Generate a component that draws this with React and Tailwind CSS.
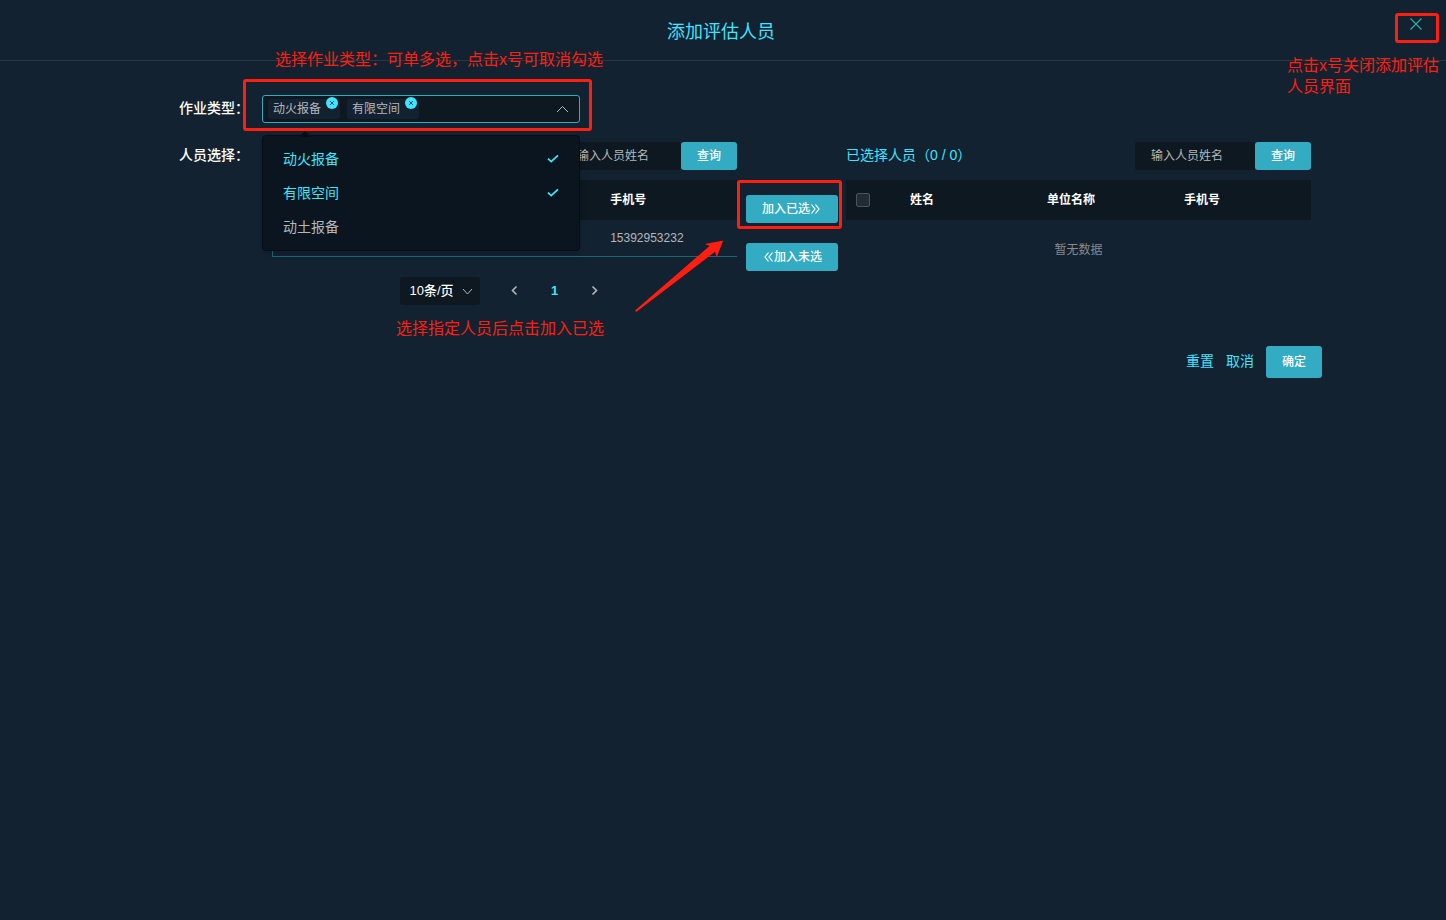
import React, { useState } from 'react';

const workTypes = ['动火报备', '有限空间', '动土报备'];

function Chevron({ direction, className }) {
  const paths = {
    up: 'M1 9 L6.5 3.5 L12 9',
    down: 'M2 4 L6.5 9 L11 4',
    left: 'M8.5 2.5 L4.5 6.5 L8.5 10.5',
    right: 'M4.5 2.5 L8.5 6.5 L4.5 10.5'
  };
  return (
    <svg viewBox="0 0 13 13" fill="none" stroke="currentColor" className={className}>
      <path d={paths[direction]} />
    </svg>
  );
}

function DoubleArrow({ flip }) {
  return (
    <svg
      viewBox="0 0 12 12"
      fill="none"
      stroke="currentColor"
      strokeWidth="1.2"
      className={flip ? 'size-3 rotate-180' : 'size-3'}
    >
      <path d="M1.5 1.5 L5 6 L1.5 10.5 M5.5 1.5 L9 6 L5.5 10.5" />
    </svg>
  );
}

function WorkTypeSelect() {
  const [selected, setSelected] = useState(['动火报备', '有限空间']);
  const [open, setOpen] = useState(true);

  const toggle = (type) => {
    setSelected(
      selected.includes(type) ? selected.filter(t => t !== type) : [...selected, type]
    );
  };

  return (
    <div className="relative w-[318px]">
      <div className="flex items-center h-7 pl-[5px] pr-[10px] gap-[7px] rounded-[3px] border border-[#32abc3] bg-[#0e1821]">
        {selected.map(type => (
          <span
            key={type}
            className="relative h-5 w-[72px] pl-[5px] rounded-[3px] bg-[#132230] text-xs leading-5 text-[#b4b8bb]"
          >
            {type}
            <button
              type="button"
              aria-label={`取消${type}`}
              onClick={() => toggle(type)}
              className="absolute -top-0.5 right-0.5 size-3 rounded-full bg-[#3de5ff] text-[#132230]"
            >
              <svg viewBox="0 0 12 12" stroke="currentColor" strokeWidth="0.8" className="size-3">
                <path d="M4 4 L8 8 M8 4 L4 8" />
              </svg>
            </button>
          </span>
        ))}
        <button
          id="work-type"
          type="button"
          aria-haspopup="listbox"
          aria-expanded={open}
          onClick={() => setOpen(!open)}
          className="flex flex-1 items-center justify-end h-full text-[#b4b8bb]"
        >
          <Chevron direction={open ? 'up' : 'down'} className="size-[13px]" />
        </button>
      </div>

      {/* Dropdown */}
      {open && (
        <div className="absolute top-10 left-0 z-10 w-full py-1.5 rounded border border-[#060d14] bg-[#0a1520] shadow-md">
          <svg viewBox="0 0 12 6" className="absolute -top-[5px] left-9 w-3 h-1.5 fill-[#060d14]">
            <path d="M0 6 L6 0 L12 6 Z" />
          </svg>
          <ul role="listbox" aria-multiselectable="true" aria-labelledby="work-type-label">
            {workTypes.map(type => (
              <li
                key={type}
                role="option"
                aria-selected={selected.includes(type)}
                onClick={() => toggle(type)}
                className={`flex items-center justify-between h-[34px] px-5 text-sm cursor-pointer ${
                  selected.includes(type) ? 'text-[#3de5ff]' : 'text-[#b4b8bb]'
                }`}
              >
                {type}
                {selected.includes(type) && (
                  <svg viewBox="0 0 12 12" fill="none" stroke="currentColor" strokeWidth="1.8" className="size-3">
                    <path d="M1 5.6 L4.2 8.6 L11 2.4" />
                  </svg>
                )}
              </li>
            ))}
          </ul>
        </div>
      )}

      {/* Callout */}
      <div className="absolute -top-4 -left-[19px] w-[349px] h-[52px] rounded-[3px] border-3 border-[#ff1e10] pointer-events-none"></div>
      <p className="absolute -top-[47px] left-[13px] whitespace-nowrap text-base leading-6 text-[#ff1e10]">
        选择作业类型：可单多选，点击x号可取消勾选
      </p>
    </div>
  );
}

function SearchBar({ label }) {
  return (
    <div className="flex ml-auto">
      <input
        type="text"
        aria-label={label}
        placeholder="输入人员姓名"
        className="w-[120px] h-7 px-4 rounded-[3px] bg-[#0e1821] text-xs text-white placeholder:text-[#b4b8bb] outline-none"
      />
      <button type="button" className="w-14 h-7 rounded-[3px] bg-[#32abc3] text-xs font-medium text-white">
        查询
      </button>
    </div>
  );
}

function PeopleTable({ label, rows }) {
  return (
    <table className="w-full mt-2.5 table-fixed text-left text-xs">
      <thead>
        <tr className="h-10 bg-[#0e1821] text-white">
          <th className="w-[54px] pl-2.5">
            <input
              type="checkbox"
              aria-label={label}
              className="block size-3.5 appearance-none rounded-[2px] border border-[#4b545c] bg-[#222c34] checked:bg-[#32abc3]"
            />
          </th>
          <th className="pl-2.5 font-bold">姓名</th>
          <th className="pl-2.5 font-bold">单位名称</th>
          <th className="pl-2.5 font-bold">手机号</th>
        </tr>
      </thead>
      <tbody>
        {rows.map(row => (
          <tr key={row.phone} className="h-9 border-b border-l border-[#1f6475] text-[#b4b8bb]">
            <td></td>
            <td></td>
            <td></td>
            <td className="pl-2.5">{row.phone}</td>
          </tr>
        ))}
        {rows.length === 0 && (
          <tr className="h-15 text-center text-[#858a8e]">
            <td colSpan={4}>暂无数据</td>
          </tr>
        )}
      </tbody>
    </table>
  );
}

function Pagination() {
  return (
    <div className="flex justify-center mt-5 text-[13px]">
      <div className="relative mr-5">
        <select
          aria-label="每页条数"
          className="w-20 h-7 pl-2.5 appearance-none rounded-[3px] bg-[#0e1821] font-medium text-white outline-none"
        >
          <option>10条/页</option>
        </select>
        <Chevron direction="down" className="absolute top-2 right-1.5 size-[13px] text-[#b4b8bb] pointer-events-none" />
      </div>
      <div className="flex gap-2.5">
        <button type="button" aria-label="上一页" className="flex items-center justify-center w-[30px] h-7 text-[#b4b8bb]">
          <Chevron direction="left" className="size-[13px] stroke-[1.6]" />
        </button>
        <button type="button" className="w-[30px] h-7 font-bold text-[#3de5ff]">1</button>
        <button type="button" aria-label="下一页" className="flex items-center justify-center w-[30px] h-7 text-[#b4b8bb]">
          <Chevron direction="right" className="size-[13px] stroke-[1.6]" />
        </button>
      </div>
    </div>
  );
}

function App() {
  return (
    <div className="relative min-h-screen bg-[#132230] font-['Liberation_Sans','Noto_Sans_CJK_SC',sans-serif]">
      {/* Header */}
      <header className="relative flex items-center justify-center h-[61px] pt-1 pr-1 border-b border-[#2a3842]">
        <h1 className="text-lg text-[#3de5ff]">添加评估人员</h1>
        <button
          type="button"
          aria-label="关闭"
          className="absolute top-[13px] right-[7px] flex justify-center w-11 h-[30px] pt-0.5 pr-0.5 rounded-[3px] border-3 border-[#ff1e10] text-[#3aa99c]"
        >
          <svg viewBox="0 0 12 12" stroke="currentColor" strokeWidth="1.2" className="size-3">
            <path d="M0.5 0.5 L11.5 11.5 M11.5 0.5 L0.5 11.5" />
          </svg>
        </button>
        <p className="absolute top-[55px] right-[7px] w-[152px] text-base leading-[21px] text-[#ff1e10]">
          点击x号关闭添加评估人员界面
        </p>
      </header>

      <main className="pt-[34px] pl-[179px] pr-[135px]">
        <div className="flex">
          <label id="work-type-label" htmlFor="work-type" className="w-[83px] text-sm leading-[26px] font-medium text-white">
            作业类型：
          </label>
          <WorkTypeSelect />
        </div>

        <div className="flex mt-[19px]">
          <span className="w-[93px] text-sm leading-[26px] font-medium text-white">人员选择：</span>

          {/* Available people */}
          <section className="relative flex-1">
            <div className="flex">
              <SearchBar label="查询未选人员" />
            </div>
            <PeopleTable label="全选未选人员" rows={[{ phone: '15392953232' }]} />
            <Pagination />
            <p className="absolute top-[175px] left-[124px] whitespace-nowrap text-base leading-6 text-[#ff1e10]">
              选择指定人员后点击加入已选
            </p>
            <svg viewBox="0 0 92 74" className="absolute top-[97px] right-2.5 w-[92px] h-[74px] fill-[#ff1e10]">
              <path d="M0 71.6 L74.5 7 L70 5 L88.2 1.4 L81.8 18 L80 12.8 L1.2 73 Z" />
            </svg>
          </section>

          {/* Transfer buttons */}
          <div className="relative flex flex-col gap-5 ml-[9px] mr-2 pt-[53px]">
            <button type="button" className="flex items-center justify-center w-[92px] h-7 rounded-[3px] bg-[#32abc3] text-xs font-medium text-white">
              加入已选
              <DoubleArrow />
            </button>
            <button type="button" className="flex items-center justify-center w-[92px] h-7 rounded-[3px] bg-[#32abc3] text-xs font-medium text-white">
              <DoubleArrow flip />
              加入未选
            </button>
            <div className="absolute top-[38px] -left-[9px] w-[105px] h-[49px] rounded-[3px] border-3 border-[#ff1e10] pointer-events-none"></div>
          </div>

          {/* Selected people */}
          <section className="flex-1">
            <div className="flex">
              <h2 className="text-sm leading-[26px] text-[#3de5ff]">已选择人员（0 / 0）</h2>
              <SearchBar label="查询已选人员" />
            </div>
            <PeopleTable label="全选已选人员" rows={[]} />
          </section>
        </div>
      </main>

      {/* Footer */}
      <footer className="flex items-center justify-end gap-3 mt-[41px] pr-[124px]">
        <button type="button" className="pb-0.5 text-sm text-[#3de5ff]">重置</button>
        <button type="button" className="pb-0.5 text-sm text-[#3de5ff]">取消</button>
        <button type="button" className="w-14 h-8 rounded-[3px] bg-[#32abc3] text-xs font-medium text-white">确定</button>
      </footer>
    </div>
  );
}

export default App;
